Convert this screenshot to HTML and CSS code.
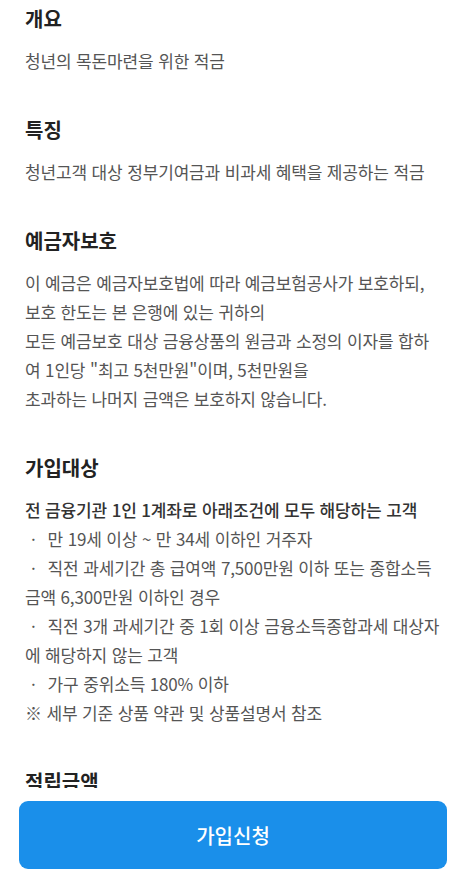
FILE: index.html
```html
<!DOCTYPE html>
<html lang="ko">
<head>
<meta charset="utf-8">
<meta name="viewport" content="width=device-width, initial-scale=1">
<title>상품안내</title>
<link rel="stylesheet" href="styles.css">
</head>
<body>
<main class="content">
  <section class="sec">
    <h2 class="sec-title">개요</h2>
    <p class="sec-text">청년의 목돈마련을 위한 적금</p>
  </section>
  <section class="sec">
    <h2 class="sec-title">특징</h2>
    <p class="sec-text">청년고객 대상 정부기여금과 비과세 혜택을 제공하는 적금</p>
  </section>
  <section class="sec">
    <h2 class="sec-title">예금자보호</h2>
    <p class="sec-text">이 예금은 예금자보호법에 따라 예금보험공사가 보호하되,<br>보호 한도는 본 은행에 있는 귀하의<br>모든 예금보호 대상 금융상품의 원금과 소정의 이자를 합하여 1인당 "최고 5천만원"이며, 5천만원을<br>초과하는 나머지 금액은 보호하지 않습니다.</p>
  </section>
  <section class="sec">
    <h2 class="sec-title">가입대상</h2>
    <div class="sec-text">
      <p class="lead">전 금융기관 1인 1계좌로 아래조건에 모두 해당하는 고객</p>
      <p class="item bullet">만 19세 이상 ~ 만 34세 이하인 거주자</p>
      <p class="item bullet">직전 과세기간 총 급여액 7,500만원 이하 또는 종합소득금액 6,300만원 이하인 경우</p>
      <p class="item bullet">직전 3개 과세기간 중 1회 이상 금융소득종합과세 대상자에 해당하지 않는 고객</p>
      <p class="item bullet">가구 중위소득 180% 이하</p>
      <p class="item">※ 세부 기준 상품 약관 및 상품설명서 참조</p>
    </div>
  </section>
  <section class="sec">
    <h2 class="sec-title">적립금액</h2>
  </section>
</main>
<footer class="footer">
  <button class="cta" type="button">가입신청</button>
</footer>
</body>
</html>
```
FILE: styles.css
```css
* { box-sizing: border-box; }
html, body {
  margin: 0;
  padding: 0;
  background: #ffffff;
}
body {
  font-family: "Noto Sans CJK KR", "Noto Sans", sans-serif;
  color: #222;
}
.content {
  padding: 5px 25px 0;
  display: flex;
  flex-direction: column;
  gap: 41px;
}
.sec {
  display: flex;
  flex-direction: column;
  gap: 13px;
}
.sec-title {
  margin: 0;
  font-size: 20px;
  line-height: 28px;
  font-weight: 700;
  color: #222;
}
.sec-text {
  margin: 0;
  font-size: 17px;
  line-height: 29px;
  color: #555;
  letter-spacing: -0.15px;
}
.sec-text p { margin: 0; }
.lead {
  color: #333;
  font-weight: 500;
}
.bullet::before {
  content: "·";
  margin: 0 12px 0 6px;
}
.footer {
  position: fixed;
  left: 0;
  right: 0;
  bottom: 0;
  height: 90px;
  background: #ffffff;
  padding: 13px 19px 9px;
}
.cta {
  width: 100%;
  height: 68px;
  border: 0;
  border-radius: 9px;
  background: #1a8fea;
  color: #ffffff;
  font-family: "Noto Sans CJK KR", "Noto Sans", sans-serif;
  font-size: 20px;
  font-weight: 500;
}
```
